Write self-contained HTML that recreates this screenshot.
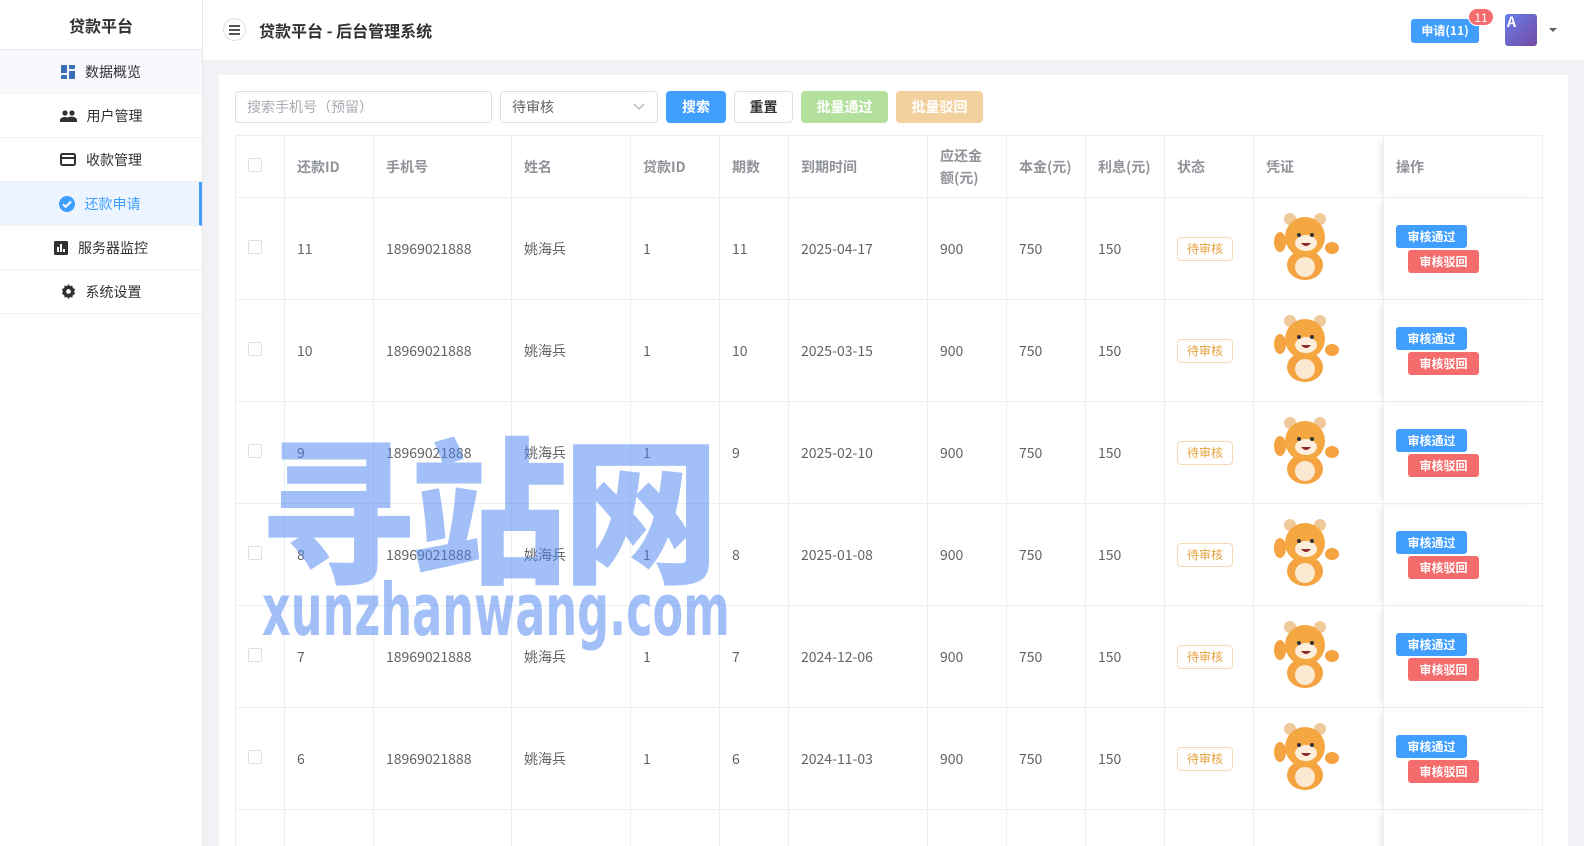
<!DOCTYPE html>
<html><head><meta charset="utf-8">
<style>
*{box-sizing:border-box;margin:0;padding:0}
html,body{width:1584px;height:846px;overflow:hidden}
body{font-family:"Noto Sans CJK SC","Liberation Sans",sans-serif;background:#f0f2f5;color:#606266;font-size:14px}
#wrap{position:relative;width:1584px;height:846px;overflow:hidden}
.side{position:absolute;left:0;top:0;width:203px;height:846px;background:#fff;border-right:1px solid #e6e6e6}
.logo{height:50px;border-bottom:1px solid #e6e6e6;text-align:center;line-height:50px;font-size:16px;font-weight:bold;color:#303133}
.mi{height:44px;border-bottom:1px solid #f0f0f0;display:flex;align-items:center;justify-content:center;font-size:14px;color:#303133;gap:10px}
.mi.first{background:#f7f9fc}
.mi.act{background:#ecf5ff;color:#409eff;border-right:3px solid #409eff}
.head{position:absolute;left:203px;top:0;right:0;height:60px;background:#fff}
.card{position:absolute;left:219px;top:75px;width:1349px;height:771px;background:#fff}
.inp{position:absolute;top:91px;height:32px;border:1px solid #dcdfe6;border-radius:4px;font-size:14px;line-height:30px;padding-left:11px}
.btn{position:absolute;top:91px;height:32px;border-radius:4px;font-size:14px;line-height:32px;text-align:center;color:#fff;font-weight:bold}
.clip{position:absolute;left:235px;top:135px;width:1310px;height:711px;overflow:hidden}
table{width:1307px;border-collapse:collapse;table-layout:fixed}
td,th{border:1px solid #ebeef5;padding-left:12px;text-align:left;font-size:14px}
th{height:62px;color:#909399;font-weight:bold;line-height:22px}
td{height:102px;color:#606266}
.cb{display:inline-block;width:14px;height:14px;border:1px solid #dcdfe6;border-radius:2px;background:#fff}
.tag{display:inline-block;border:1px solid #f5dab1;color:#e6a23c;border-radius:4px;font-size:12px;height:24px;line-height:22px;padding:0 9px}
.ok,.no{display:block;width:71px;height:23px;line-height:23px;border-radius:3px;color:#fff;font-size:12px;font-weight:bold;text-align:center}
.ok{background:#409eff}
.no{background:#f56c6c;margin:2px 0 0 12px}
.sh{box-shadow:-6px 0 8px -4px rgba(0,0,0,.12)}
.wm{position:absolute;color:rgba(70,130,240,0.5);font-weight:900;pointer-events:none;white-space:nowrap}
</style></head><body><div id="wrap">
<div class="side">
<div class="logo">贷款平台</div>
<div class="mi first"><svg width="14" height="14"><rect x="0" y="0" width="6" height="8" fill="#3a6fb5"/><rect x="8" y="0" width="6" height="4" fill="#3a6fb5"/><rect x="0" y="10" width="6" height="4" fill="#3a6fb5"/><rect x="8" y="6" width="6" height="8" fill="#3a6fb5"/></svg><span>数据概览</span></div>
<div class="mi"><svg width="17" height="12"><circle cx="5" cy="3" r="2.6" fill="#303133"/><circle cx="12" cy="3" r="2.6" fill="#303133"/><path d="M0 12v-2c0-2 3-3 5-3s5 1 5 3v2zM9 12v-2c0-1 0-2-1-3 4-1 9 0 9 3v2z" fill="#303133"/></svg>用户管理</div>
<div class="mi"><svg width="16" height="13"><rect x="1" y="1" width="14" height="11" rx="1.5" fill="none" stroke="#303133" stroke-width="2"/><rect x="1" y="4" width="14" height="2" fill="#303133"/></svg>收款管理</div>
<div class="mi act"><svg width="16" height="16"><circle cx="8" cy="8" r="8" fill="#409eff"/><path d="M4 8.3l2.7 2.6L12 5.5" fill="none" stroke="#fff" stroke-width="2"/></svg>还款申请</div>
<div class="mi"><svg width="14" height="14"><rect width="14" height="14" rx="1.5" fill="#303133"/><rect x="3" y="6" width="2" height="5" fill="#fff"/><rect x="6" y="3" width="2" height="8" fill="#fff"/><rect x="9" y="8" width="2" height="3" fill="#fff"/></svg>服务器监控</div>
<div class="mi"><svg width="15" height="15" viewBox="0 0 16 16"><path d="M8 0l1.5 2.2 2.6-.6.5 2.6 2.4 1.2-1 2.6 1 2.6-2.4 1.2-.5 2.6-2.6-.6L8 16l-1.5-2.2-2.6.6-.5-2.6L1 10.6l1-2.6-1-2.6 2.4-1.2.5-2.6 2.6.6z" fill="#303133"/><circle cx="8" cy="8" r="2.5" fill="#fff"/></svg>系统设置</div>
</div>
<div class="head">
<div style="position:absolute;left:20px;top:18px;width:23px;height:23px;border:1px solid #dcdfe6;border-radius:50%"><div style="position:absolute;left:5px;top:6px;width:11px;height:2px;background:#555;box-shadow:0 4px #555,0 8px #555"></div></div>
<div style="position:absolute;left:56px;top:18px;font-size:16px;font-weight:bold;color:#303133;line-height:24px">贷款平台 - 后台管理系统</div>
<div style="position:absolute;left:1208px;top:19px;width:68px;height:24px;background:#409eff;border-radius:3px;color:#fff;font-size:12px;font-weight:bold;text-align:center;line-height:24px">申请(11)</div>
<div style="position:absolute;left:1265px;top:8px;width:26px;height:18px;background:#f56c6c;border-radius:9px;color:#fff;font-size:12px;text-align:center;line-height:17px;border:1px solid #fff">11</div>
<div style="position:absolute;left:1302px;top:14px;width:32px;height:32px;border-radius:3px;background:linear-gradient(135deg,#667eea,#764ba2);color:#fff;font-size:14px;font-weight:bold;padding-left:2px;line-height:16px">A</div>
<div style="position:absolute;left:1346px;top:28px;border:4px solid transparent;border-top:4px solid #606266"></div>
</div>
<div class="card"></div>
<div class="inp" style="left:235px;width:257px;color:#a8abb2">搜索手机号（预留）</div>
<div class="inp" style="left:500px;width:158px;color:#606266">待审核<svg style="position:absolute;right:12px;top:11px" width="12" height="8"><path d="M1 1l5 5 5-5" fill="none" stroke="#a8abb2" stroke-width="1.2"/></svg></div>
<div class="btn" style="left:666px;width:60px;background:#409eff">搜索</div>
<div class="btn" style="left:734px;width:59px;background:#fff;border:1px solid #dcdfe6;color:#303133;line-height:30px">重置</div>
<div class="btn" style="left:801px;width:87px;background:#b3e19d">批量通过</div>
<div class="btn" style="left:896px;width:87px;background:#f3d19e">批量驳回</div>
<div class="clip">
<table>
<colgroup><col style="width:49px"><col style="width:89px"><col style="width:138px"><col style="width:119px"><col style="width:89px"><col style="width:69px"><col style="width:139px"><col style="width:79px"><col style="width:79px"><col style="width:79px"><col style="width:89px"><col style="width:130px"><col style="width:159px"></colgroup>
<tr><th><span class="cb"></span></th><th>还款ID</th><th>手机号</th><th>姓名</th><th>贷款ID</th><th>期数</th><th>到期时间</th><th>应还金<br>额(元)</th><th>本金(元)</th><th>利息(元)</th><th>状态</th><th>凭证</th><th class="sh">操作</th></tr>
<tr><td><span class="cb"></span></td><td>11</td><td>18969021888</td><td>姚海兵</td><td>1</td><td>11</td><td>2025-04-17</td><td>900</td><td>750</td><td>150</td><td><span class="tag">待审核</span></td><td><svg width="70" height="72" style="margin-left:6px"><circle cx="18" cy="9" r="6" fill="#f0c99a"/><circle cx="48" cy="9" r="6" fill="#f0c99a"/><ellipse cx="33" cy="55" rx="18" ry="15" fill="#f4a340"/><ellipse cx="33" cy="57" rx="10" ry="10" fill="#fbe9d2"/><circle cx="33" cy="27" r="20" fill="#f5a842"/><ellipse cx="34" cy="33" rx="11" ry="8" fill="#fdeedd"/><circle cx="27" cy="25" r="2" fill="#333"/><circle cx="40" cy="25" r="2" fill="#333"/><path d="M29 33q5 6 10 0z" fill="#8b2b2b"/><ellipse cx="8" cy="32" rx="6" ry="10" fill="#f4a340"/><ellipse cx="60" cy="38" rx="7" ry="6" fill="#f4a340"/></svg></td><td class="sh"><span class="ok">审核通过</span><span class="no">审核驳回</span></td></tr>
<tr><td><span class="cb"></span></td><td>10</td><td>18969021888</td><td>姚海兵</td><td>1</td><td>10</td><td>2025-03-15</td><td>900</td><td>750</td><td>150</td><td><span class="tag">待审核</span></td><td><svg width="70" height="72" style="margin-left:6px"><circle cx="18" cy="9" r="6" fill="#f0c99a"/><circle cx="48" cy="9" r="6" fill="#f0c99a"/><ellipse cx="33" cy="55" rx="18" ry="15" fill="#f4a340"/><ellipse cx="33" cy="57" rx="10" ry="10" fill="#fbe9d2"/><circle cx="33" cy="27" r="20" fill="#f5a842"/><ellipse cx="34" cy="33" rx="11" ry="8" fill="#fdeedd"/><circle cx="27" cy="25" r="2" fill="#333"/><circle cx="40" cy="25" r="2" fill="#333"/><path d="M29 33q5 6 10 0z" fill="#8b2b2b"/><ellipse cx="8" cy="32" rx="6" ry="10" fill="#f4a340"/><ellipse cx="60" cy="38" rx="7" ry="6" fill="#f4a340"/></svg></td><td class="sh"><span class="ok">审核通过</span><span class="no">审核驳回</span></td></tr>
<tr><td><span class="cb"></span></td><td>9</td><td>18969021888</td><td>姚海兵</td><td>1</td><td>9</td><td>2025-02-10</td><td>900</td><td>750</td><td>150</td><td><span class="tag">待审核</span></td><td><svg width="70" height="72" style="margin-left:6px"><circle cx="18" cy="9" r="6" fill="#f0c99a"/><circle cx="48" cy="9" r="6" fill="#f0c99a"/><ellipse cx="33" cy="55" rx="18" ry="15" fill="#f4a340"/><ellipse cx="33" cy="57" rx="10" ry="10" fill="#fbe9d2"/><circle cx="33" cy="27" r="20" fill="#f5a842"/><ellipse cx="34" cy="33" rx="11" ry="8" fill="#fdeedd"/><circle cx="27" cy="25" r="2" fill="#333"/><circle cx="40" cy="25" r="2" fill="#333"/><path d="M29 33q5 6 10 0z" fill="#8b2b2b"/><ellipse cx="8" cy="32" rx="6" ry="10" fill="#f4a340"/><ellipse cx="60" cy="38" rx="7" ry="6" fill="#f4a340"/></svg></td><td class="sh"><span class="ok">审核通过</span><span class="no">审核驳回</span></td></tr>
<tr><td><span class="cb"></span></td><td>8</td><td>18969021888</td><td>姚海兵</td><td>1</td><td>8</td><td>2025-01-08</td><td>900</td><td>750</td><td>150</td><td><span class="tag">待审核</span></td><td><svg width="70" height="72" style="margin-left:6px"><circle cx="18" cy="9" r="6" fill="#f0c99a"/><circle cx="48" cy="9" r="6" fill="#f0c99a"/><ellipse cx="33" cy="55" rx="18" ry="15" fill="#f4a340"/><ellipse cx="33" cy="57" rx="10" ry="10" fill="#fbe9d2"/><circle cx="33" cy="27" r="20" fill="#f5a842"/><ellipse cx="34" cy="33" rx="11" ry="8" fill="#fdeedd"/><circle cx="27" cy="25" r="2" fill="#333"/><circle cx="40" cy="25" r="2" fill="#333"/><path d="M29 33q5 6 10 0z" fill="#8b2b2b"/><ellipse cx="8" cy="32" rx="6" ry="10" fill="#f4a340"/><ellipse cx="60" cy="38" rx="7" ry="6" fill="#f4a340"/></svg></td><td class="sh"><span class="ok">审核通过</span><span class="no">审核驳回</span></td></tr>
<tr><td><span class="cb"></span></td><td>7</td><td>18969021888</td><td>姚海兵</td><td>1</td><td>7</td><td>2024-12-06</td><td>900</td><td>750</td><td>150</td><td><span class="tag">待审核</span></td><td><svg width="70" height="72" style="margin-left:6px"><circle cx="18" cy="9" r="6" fill="#f0c99a"/><circle cx="48" cy="9" r="6" fill="#f0c99a"/><ellipse cx="33" cy="55" rx="18" ry="15" fill="#f4a340"/><ellipse cx="33" cy="57" rx="10" ry="10" fill="#fbe9d2"/><circle cx="33" cy="27" r="20" fill="#f5a842"/><ellipse cx="34" cy="33" rx="11" ry="8" fill="#fdeedd"/><circle cx="27" cy="25" r="2" fill="#333"/><circle cx="40" cy="25" r="2" fill="#333"/><path d="M29 33q5 6 10 0z" fill="#8b2b2b"/><ellipse cx="8" cy="32" rx="6" ry="10" fill="#f4a340"/><ellipse cx="60" cy="38" rx="7" ry="6" fill="#f4a340"/></svg></td><td class="sh"><span class="ok">审核通过</span><span class="no">审核驳回</span></td></tr>
<tr><td><span class="cb"></span></td><td>6</td><td>18969021888</td><td>姚海兵</td><td>1</td><td>6</td><td>2024-11-03</td><td>900</td><td>750</td><td>150</td><td><span class="tag">待审核</span></td><td><svg width="70" height="72" style="margin-left:6px"><circle cx="18" cy="9" r="6" fill="#f0c99a"/><circle cx="48" cy="9" r="6" fill="#f0c99a"/><ellipse cx="33" cy="55" rx="18" ry="15" fill="#f4a340"/><ellipse cx="33" cy="57" rx="10" ry="10" fill="#fbe9d2"/><circle cx="33" cy="27" r="20" fill="#f5a842"/><ellipse cx="34" cy="33" rx="11" ry="8" fill="#fdeedd"/><circle cx="27" cy="25" r="2" fill="#333"/><circle cx="40" cy="25" r="2" fill="#333"/><path d="M29 33q5 6 10 0z" fill="#8b2b2b"/><ellipse cx="8" cy="32" rx="6" ry="10" fill="#f4a340"/><ellipse cx="60" cy="38" rx="7" ry="6" fill="#f4a340"/></svg></td><td class="sh"><span class="ok">审核通过</span><span class="no">审核驳回</span></td></tr>
<tr><td><span class="cb"></span></td><td></td><td></td><td></td><td></td><td></td><td></td><td></td><td></td><td></td><td></td><td></td><td class="sh"></td></tr>
</table>
</div>
<div class="wm" style="left:258px;top:418px;font-size:158px;line-height:170px;font-family:'Noto Sans CJK SC',sans-serif;letter-spacing:-6px">寻站网</div>
<div class="wm" style="left:262px;top:570px;font-size:72px;line-height:80px;font-family:'DejaVu Sans',sans-serif;transform:scaleX(0.62);transform-origin:left">xunzhanwang.com</div>
</div></body></html>
